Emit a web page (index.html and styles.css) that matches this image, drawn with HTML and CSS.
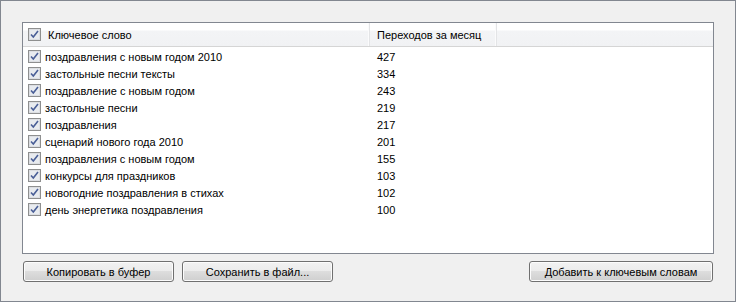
FILE: index.html
```html
<!DOCTYPE html>
<html>
<head>
<meta charset="utf-8">
<link rel="stylesheet" href="styles.css">
</head>
<body>
<div class="window">
  <div class="list">
    <div class="header">
      <div class="hcol hcol-key">
        <svg class="cb" viewBox="0 0 13 13"><rect x="0.5" y="0.5" width="12" height="12" fill="#fff" stroke="#8e8f8f"/><rect x="1.5" y="1.5" width="10" height="10" fill="#e8ebef" stroke="#dcdee2"/><path d="M3 6.5 L5.3 9 L10 3" fill="none" stroke="#4a5f97" stroke-width="1.6"/></svg>
        <span class="htext">Ключевое слово</span>
      </div>
      <div class="hcol hcol-num"><span>Переходов за месяц</span></div>
      <div class="hcol hcol-rest"></div>
    </div>
    <div class="rows">
      <div class="row"><svg class="cb" viewBox="0 0 13 13"><rect x="0.5" y="0.5" width="12" height="12" fill="#fff" stroke="#8e8f8f"/><rect x="1.5" y="1.5" width="10" height="10" fill="#e8ebef" stroke="#dcdee2"/><path d="M3 6.5 L5.3 9 L10 3" fill="none" stroke="#4a5f97" stroke-width="1.6"/></svg><span class="kw">поздравления с новым годом 2010</span><span class="num">427</span></div>
      <div class="row"><svg class="cb" viewBox="0 0 13 13"><rect x="0.5" y="0.5" width="12" height="12" fill="#fff" stroke="#8e8f8f"/><rect x="1.5" y="1.5" width="10" height="10" fill="#e8ebef" stroke="#dcdee2"/><path d="M3 6.5 L5.3 9 L10 3" fill="none" stroke="#4a5f97" stroke-width="1.6"/></svg><span class="kw">застольные песни тексты</span><span class="num">334</span></div>
      <div class="row"><svg class="cb" viewBox="0 0 13 13"><rect x="0.5" y="0.5" width="12" height="12" fill="#fff" stroke="#8e8f8f"/><rect x="1.5" y="1.5" width="10" height="10" fill="#e8ebef" stroke="#dcdee2"/><path d="M3 6.5 L5.3 9 L10 3" fill="none" stroke="#4a5f97" stroke-width="1.6"/></svg><span class="kw">поздравление с новым годом</span><span class="num">243</span></div>
      <div class="row"><svg class="cb" viewBox="0 0 13 13"><rect x="0.5" y="0.5" width="12" height="12" fill="#fff" stroke="#8e8f8f"/><rect x="1.5" y="1.5" width="10" height="10" fill="#e8ebef" stroke="#dcdee2"/><path d="M3 6.5 L5.3 9 L10 3" fill="none" stroke="#4a5f97" stroke-width="1.6"/></svg><span class="kw">застольные песни</span><span class="num">219</span></div>
      <div class="row"><svg class="cb" viewBox="0 0 13 13"><rect x="0.5" y="0.5" width="12" height="12" fill="#fff" stroke="#8e8f8f"/><rect x="1.5" y="1.5" width="10" height="10" fill="#e8ebef" stroke="#dcdee2"/><path d="M3 6.5 L5.3 9 L10 3" fill="none" stroke="#4a5f97" stroke-width="1.6"/></svg><span class="kw">поздравления</span><span class="num">217</span></div>
      <div class="row"><svg class="cb" viewBox="0 0 13 13"><rect x="0.5" y="0.5" width="12" height="12" fill="#fff" stroke="#8e8f8f"/><rect x="1.5" y="1.5" width="10" height="10" fill="#e8ebef" stroke="#dcdee2"/><path d="M3 6.5 L5.3 9 L10 3" fill="none" stroke="#4a5f97" stroke-width="1.6"/></svg><span class="kw">сценарий нового года 2010</span><span class="num">201</span></div>
      <div class="row"><svg class="cb" viewBox="0 0 13 13"><rect x="0.5" y="0.5" width="12" height="12" fill="#fff" stroke="#8e8f8f"/><rect x="1.5" y="1.5" width="10" height="10" fill="#e8ebef" stroke="#dcdee2"/><path d="M3 6.5 L5.3 9 L10 3" fill="none" stroke="#4a5f97" stroke-width="1.6"/></svg><span class="kw">поздравления с новым годом</span><span class="num">155</span></div>
      <div class="row"><svg class="cb" viewBox="0 0 13 13"><rect x="0.5" y="0.5" width="12" height="12" fill="#fff" stroke="#8e8f8f"/><rect x="1.5" y="1.5" width="10" height="10" fill="#e8ebef" stroke="#dcdee2"/><path d="M3 6.5 L5.3 9 L10 3" fill="none" stroke="#4a5f97" stroke-width="1.6"/></svg><span class="kw">конкурсы для праздников</span><span class="num">103</span></div>
      <div class="row"><svg class="cb" viewBox="0 0 13 13"><rect x="0.5" y="0.5" width="12" height="12" fill="#fff" stroke="#8e8f8f"/><rect x="1.5" y="1.5" width="10" height="10" fill="#e8ebef" stroke="#dcdee2"/><path d="M3 6.5 L5.3 9 L10 3" fill="none" stroke="#4a5f97" stroke-width="1.6"/></svg><span class="kw">новогодние поздравления в стихах</span><span class="num">102</span></div>
      <div class="row"><svg class="cb" viewBox="0 0 13 13"><rect x="0.5" y="0.5" width="12" height="12" fill="#fff" stroke="#8e8f8f"/><rect x="1.5" y="1.5" width="10" height="10" fill="#e8ebef" stroke="#dcdee2"/><path d="M3 6.5 L5.3 9 L10 3" fill="none" stroke="#4a5f97" stroke-width="1.6"/></svg><span class="kw">день энергетика поздравления</span><span class="num">100</span></div>
    </div>
  </div>
  <div class="buttons">
    <button class="btn btn-copy">Копировать в буфер</button>
    <button class="btn btn-save">Сохранить в файл...</button>
    <button class="btn btn-add">Добавить к ключевым словам</button>
  </div>
</div>
</body>
</html>
```

FILE: styles.css
```css
* { box-sizing: border-box; }
html, body { margin: 0; padding: 0; background: #f0f0f0; }
body {
  font-family: "Liberation Sans", Arial, sans-serif;
  font-size: 11px;
  color: #000;
}
.window {
  width: 736px;
  height: 302px;
  border: 1px solid #828790;
  background: #f0f0f0;
  padding: 21px 0 0 21px;
}
.list {
  width: 692px;
  height: 232px;
  border: 1px solid #828790;
  background: #fff;
}
.header {
  display: flex;
  height: 24px;
  border-bottom: 1px solid #d5d5d5;
  background: linear-gradient(#ffffff 0, #ffffff 7px, #f3f4f6 8px, #f1f2f4 23px);
}
.hcol {
  display: flex;
  align-items: center;
  height: 100%;
  border-right: 1px solid #e3e4e6;
  box-shadow: inset -1px 0 0 #fbfbfc;
}
.hcol-key { width: 347px; padding-left: 5px; }
.hcol-key .htext { margin-left: 7px; }
.hcol-num { width: 127px; padding-left: 7px; }
.hcol-rest { flex: 1; border-right: none; box-shadow: none; }
.cb { width: 13px; height: 13px; flex: none; display: block; }
.rows { padding-top: 1px; }
.row {
  display: flex;
  align-items: center;
  height: 17px;
  padding-left: 5px;
}
.kw { margin-left: 4px; width: 332px; flex: none; }
.buttons {
  display: flex;
  margin-top: 7px;
  padding-left: 1px;
  width: 692px;
}
.btn {
  height: 21px;
  border: 1px solid #707070;
  border-radius: 3px;
  background: linear-gradient(#f2f2f2 0, #ebebeb 50%, #dddddd 50%, #cfcfcf 100%);
  box-shadow: inset 0 0 0 1px #fcfcfc;
  font-family: "Liberation Sans", Arial, sans-serif;
  font-size: 11px;
  color: #000;
  padding: 0;
  margin: 0;
}
.btn-copy { width: 151px; }
.btn-save { width: 151px; margin-left: 8px; }
.btn-add { width: 184px; margin-left: auto; margin-right: 1px; }
```
